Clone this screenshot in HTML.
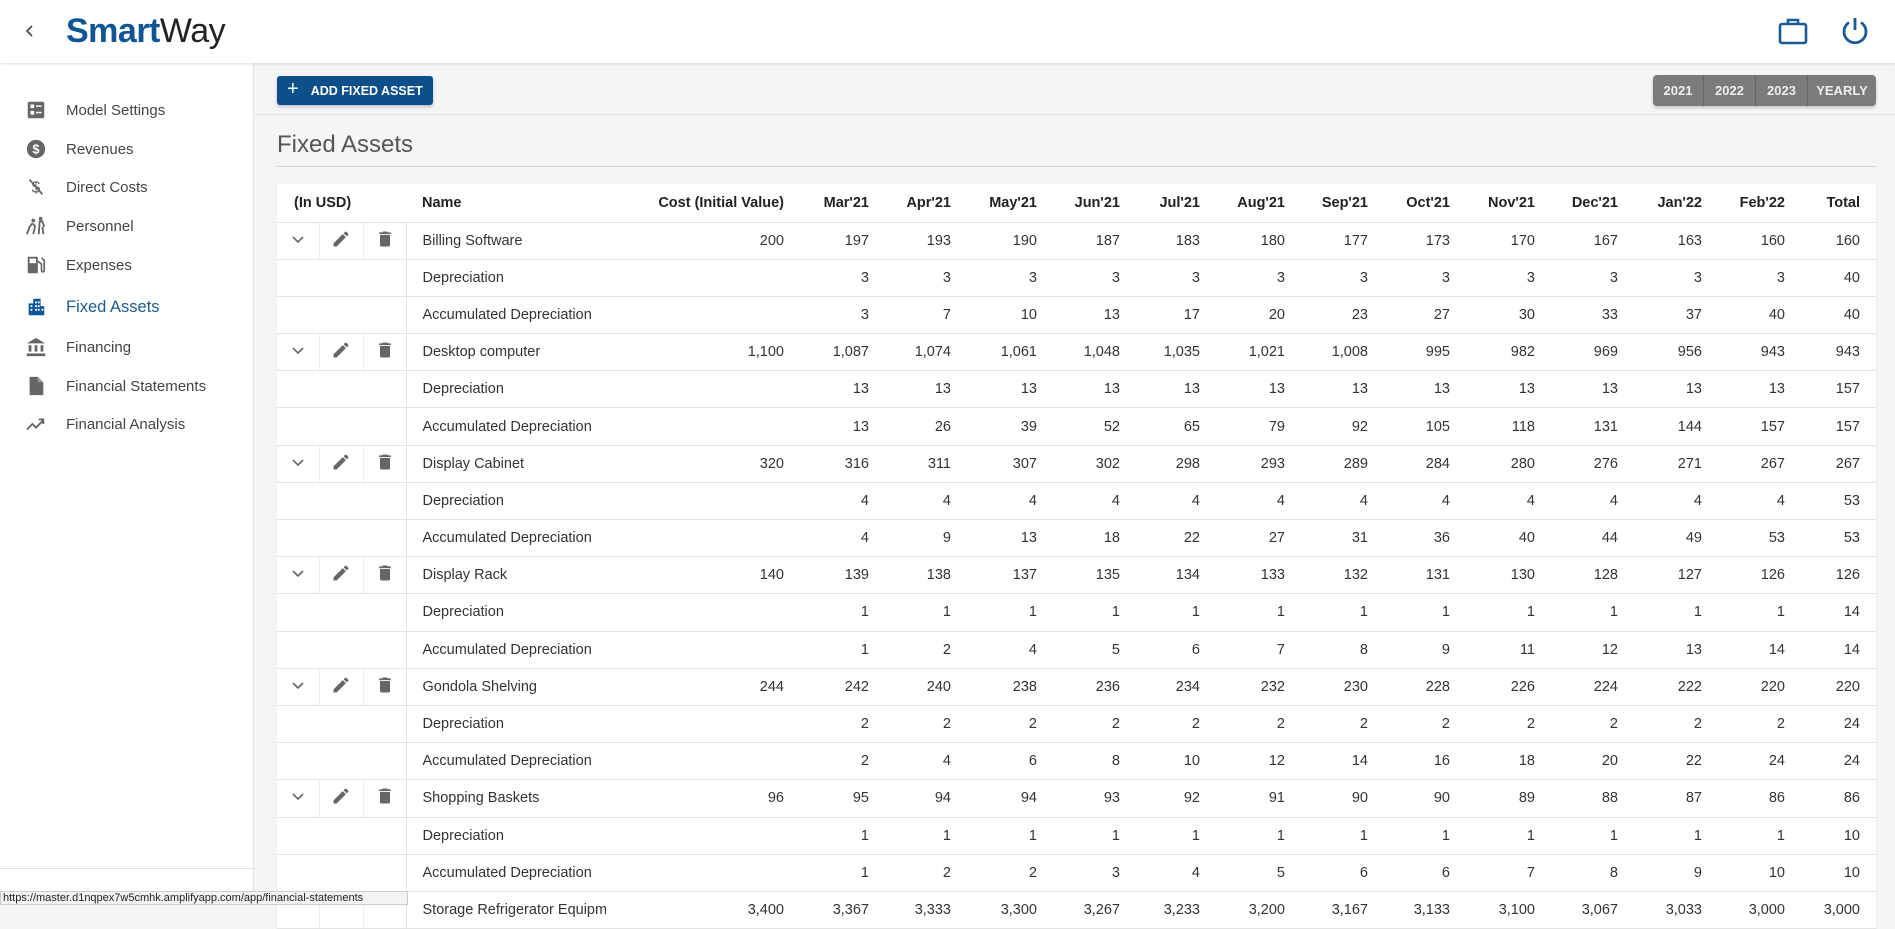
<!DOCTYPE html>
<html><head><meta charset="utf-8"><style>
*{box-sizing:border-box;margin:0;padding:0}
body{width:1895px;height:905px;overflow:hidden;font-family:"Liberation Sans",sans-serif;background:#f4f5f7;position:relative;color:#333}
.hdr{position:absolute;left:0;top:0;width:1895px;height:63px;background:#fff;box-shadow:0 1px 3px rgba(0,0,0,.12);z-index:3}
.logo{position:absolute;left:66px;top:12px;font-size:34px;letter-spacing:-0.5px}
.logo b{color:#0f5494}.logo span{color:#222}
.side{position:absolute;left:0;top:63px;width:254px;height:842px;background:#fff;border-right:1px solid #e4e4e4}
.item{position:absolute;left:0;height:30px;width:254px;display:flex;align-items:center;font-size:15px;color:#444}
.item svg{position:absolute;left:25px;width:22px;height:22px}
.item span{position:absolute;left:66px}
.bar{position:absolute;left:254px;top:63px;width:1641px;height:52px;border-bottom:1px solid #e2e2e2}
.btn{position:absolute;left:277px;top:76px;width:156px;height:29px;background:#0d4f8b;border-radius:3px;color:#fff;font-size:12.5px;font-weight:bold;display:flex;align-items:center;box-shadow:0 2px 3px rgba(0,0,0,.2)}
.yrs{position:absolute;left:1653px;top:75px;height:31px;display:flex;background:#7b7b7b;border-radius:4px;box-shadow:0 2px 3px rgba(0,0,0,.2)}
.yrs div{color:#eee;font-weight:bold;font-size:13px;display:flex;align-items:center;justify-content:center;border-right:1px solid #666}
.ttl{position:absolute;left:277px;top:131px;font-size:24px;color:#555}
.line{position:absolute;left:277px;top:166px;width:1599px;height:1px;background:#d6d6d6}
table{position:absolute;left:277px;top:184px;width:1599px;border-collapse:collapse;background:#fff;table-layout:fixed;font-size:14.5px;box-shadow:0 1px 2px rgba(0,0,0,.06)}
td,th{border-bottom:1px solid #e3e3e3;text-align:right;padding-right:16px;white-space:nowrap;overflow:hidden;color:#333;font-weight:normal}
th{height:38px;font-weight:bold;color:#222}
tr.r td{height:37.2px}
td.n,th.n{text-align:left;padding-left:16px;padding-right:0;border-left:1px solid #e3e3e3}
td.i{text-align:center;padding:0;border-right:1px solid #eee}
td.i3{border-right:none}
.st{position:absolute;left:0;top:891px;width:408px;height:14px;background:#f3f3f3;border:1px solid #ccc;font-size:11px;color:#222;line-height:12px;padding-left:2px;z-index:5}
</style></head><body>
<div class="hdr">
<svg style="position:absolute;left:24px;top:23px" width="12" height="16" viewBox="0 0 12 16"><path d="M8 3L3 8l5 5" fill="none" stroke="#444" stroke-width="1.6"/></svg>
<div class="logo"><b>Smart</b><span>Way</span></div>
<svg style="position:absolute;left:1778px;top:17px" width="30" height="28" viewBox="0 0 30 28"><rect x="2" y="7" width="26" height="19" rx="2" fill="none" stroke="#1a5a92" stroke-width="2.6"/><path d="M10 7V3h10v4" fill="none" stroke="#1a5a92" stroke-width="2.6"/></svg>
<svg style="position:absolute;left:1840px;top:16px" width="30" height="30" viewBox="0 0 30 30"><path d="M9 6.5A11 11 0 1 0 21 6.5" fill="none" stroke="#1a5a92" stroke-width="2.8"/><path d="M15 2v12" stroke="#1a5a92" stroke-width="2.8"/></svg>
</div>
<div class="side">
<div class="item" style="top:32px"><svg viewBox="0 0 24 24"><rect x="3" y="3" width="18" height="18" rx="2" fill="#666"/><rect x="6" y="6" width="4" height="4" fill="#fff"/><rect x="6" y="13" width="4" height="4" fill="#fff"/><rect x="12" y="7" width="6" height="1.6" fill="#fff"/><rect x="12" y="14" width="6" height="1.6" fill="#fff"/></svg><span>Model Settings</span></div>
<div class="item" style="top:71px"><svg viewBox="0 0 24 24"><circle cx="12" cy="12" r="10" fill="#666"/><text x="12" y="17" font-size="14" font-weight="bold" fill="#fff" text-anchor="middle" font-family="Liberation Sans">$</text></svg><span>Revenues</span></div>
<div class="item" style="top:109px"><svg viewBox="0 0 24 24"><text x="12" y="18" font-size="17" fill="#666" text-anchor="middle" font-family="Liberation Sans">$</text><path d="M5 4l14 16" stroke="#666" stroke-width="2"/></svg><span>Direct Costs</span></div>
<div class="item" style="top:148px"><svg viewBox="0 0 24 24"><circle cx="17" cy="4" r="2" fill="#666"/><circle cx="9" cy="6" r="2" fill="#666"/><path d="M15 7h4l2 6M16 7l-1 14M19 13l1 8M8 9l-3 4-3 8M8 9l3 3-2 9" fill="none" stroke="#666" stroke-width="2"/></svg><span>Personnel</span></div>
<div class="item" style="top:187px"><svg viewBox="0 0 24 24"><rect x="3" y="3" width="11" height="18" rx="1" fill="#666"/><rect x="5" y="5" width="7" height="5" fill="#fff"/><path d="M14 8l4 3v7a1.5 1.5 0 0 0 3 0V7l-3-3" fill="none" stroke="#666" stroke-width="1.8"/></svg><span>Expenses</span></div>
<div class="item" style="top:229px;color:#1d5c91;font-size:16.5px"><svg viewBox="0 0 24 24"><path d="M4 21V8h5V3h8v8h4v10z" fill="#0f5494"/><g fill="#fff"><rect x="6" y="10" width="2" height="2"/><rect x="6" y="14" width="2" height="2"/><rect x="11" y="6" width="2" height="2"/><rect x="14" y="6" width="2" height="2"/><rect x="11" y="10" width="2" height="2"/><rect x="14" y="10" width="2" height="2"/><rect x="11" y="14" width="2" height="2"/><rect x="14" y="14" width="2" height="2"/><rect x="18" y="14" width="2" height="2"/></g></svg><span>Fixed Assets</span></div>
<div class="item" style="top:269px"><svg viewBox="0 0 24 24"><path d="M2 8l10-6 10 6z" fill="#666"/><rect x="4" y="10" width="3" height="7" fill="#666"/><rect x="10.5" y="10" width="3" height="7" fill="#666"/><rect x="17" y="10" width="3" height="7" fill="#666"/><rect x="2" y="19" width="20" height="3" fill="#666"/></svg><span>Financing</span></div>
<div class="item" style="top:308px"><svg viewBox="0 0 24 24"><path d="M5 2h9l6 6v14H5z" fill="#666"/><path d="M14 2v6h6" fill="#999"/></svg><span>Financial Statements</span></div>
<div class="item" style="top:346px"><svg viewBox="0 0 24 24"><path d="M2 18l6-6 4 4 8-8M15 7h5v5" fill="none" stroke="#666" stroke-width="2"/></svg><span>Financial Analysis</span></div>
<div style="position:absolute;left:0;top:805px;width:254px;height:1px;background:#e2e2e2"></div>
</div>
<div class="bar"></div>
<div class="btn"><span style="font-size:20px;font-weight:normal;margin:0 12px 2px 10px">+</span>ADD FIXED ASSET</div>
<div class="yrs"><div style="width:51px">2021</div><div style="width:52px">2022</div><div style="width:52px">2023</div><div style="width:68px;border:none">YEARLY</div></div>
<div class="ttl">Fixed Assets</div><div class="line"></div>
<table>
<colgroup><col style="width:42px"><col style="width:44px"><col style="width:43px"><col style="width:200px"><col style="width:194px"><col style="width:85px"><col style="width:82px"><col style="width:86px"><col style="width:83px"><col style="width:80px"><col style="width:85px"><col style="width:83px"><col style="width:82px"><col style="width:85px"><col style="width:83px"><col style="width:84px"><col style="width:83px"><col style="width:75px"></colgroup>
<tr><th colspan="3" style="text-align:left;padding-left:17px">(In USD)</th><th class="n" style="border-left:none">Name</th><th>Cost (Initial Value)</th><th>Mar'21</th><th>Apr'21</th><th>May'21</th><th>Jun'21</th><th>Jul'21</th><th>Aug'21</th><th>Sep'21</th><th>Oct'21</th><th>Nov'21</th><th>Dec'21</th><th>Jan'22</th><th>Feb'22</th><th>Total</th></tr>
<!--A-->
<tr class="r"><td class="i"><svg width="14" height="10" viewBox="0 0 14 10"><path d="M2 2l5 5 5-5" fill="none" stroke="#666" stroke-width="1.6"/></svg></td><td class="i"><svg width="20" height="20" viewBox="0 0 24 24"><path d="M3 17.25V21h3.75L17.8 9.94l-3.75-3.75zM20.7 7.04a1 1 0 0 0 0-1.41l-2.34-2.34a1 1 0 0 0-1.41 0l-1.83 1.83 3.75 3.75z" fill="#666"/></svg></td><td class="i i3"><svg width="20" height="20" viewBox="0 0 24 24"><path d="M6 19a2 2 0 0 0 2 2h8a2 2 0 0 0 2-2V7H6zM19 4h-3.5l-1-1h-5l-1 1H5v2h14z" fill="#666"/></svg></td><td class="n">Billing Software</td><td>200</td><td>197</td><td>193</td><td>190</td><td>187</td><td>183</td><td>180</td><td>177</td><td>173</td><td>170</td><td>167</td><td>163</td><td>160</td><td>160</td></tr>
<tr class="r"><td colspan="3"></td><td class="n">Depreciation</td><td></td><td>3</td><td>3</td><td>3</td><td>3</td><td>3</td><td>3</td><td>3</td><td>3</td><td>3</td><td>3</td><td>3</td><td>3</td><td>40</td></tr>
<tr class="r"><td colspan="3"></td><td class="n">Accumulated Depreciation</td><td></td><td>3</td><td>7</td><td>10</td><td>13</td><td>17</td><td>20</td><td>23</td><td>27</td><td>30</td><td>33</td><td>37</td><td>40</td><td>40</td></tr>
<!--B-->
<tr class="r"><td class="i"><svg width="14" height="10" viewBox="0 0 14 10"><path d="M2 2l5 5 5-5" fill="none" stroke="#666" stroke-width="1.6"/></svg></td><td class="i"><svg width="20" height="20" viewBox="0 0 24 24"><path d="M3 17.25V21h3.75L17.8 9.94l-3.75-3.75zM20.7 7.04a1 1 0 0 0 0-1.41l-2.34-2.34a1 1 0 0 0-1.41 0l-1.83 1.83 3.75 3.75z" fill="#666"/></svg></td><td class="i i3"><svg width="20" height="20" viewBox="0 0 24 24"><path d="M6 19a2 2 0 0 0 2 2h8a2 2 0 0 0 2-2V7H6zM19 4h-3.5l-1-1h-5l-1 1H5v2h14z" fill="#666"/></svg></td><td class="n">Desktop computer</td><td>1,100</td><td>1,087</td><td>1,074</td><td>1,061</td><td>1,048</td><td>1,035</td><td>1,021</td><td>1,008</td><td>995</td><td>982</td><td>969</td><td>956</td><td>943</td><td>943</td></tr>
<tr class="r"><td colspan="3"></td><td class="n">Depreciation</td><td></td><td>13</td><td>13</td><td>13</td><td>13</td><td>13</td><td>13</td><td>13</td><td>13</td><td>13</td><td>13</td><td>13</td><td>13</td><td>157</td></tr>
<tr class="r"><td colspan="3"></td><td class="n">Accumulated Depreciation</td><td></td><td>13</td><td>26</td><td>39</td><td>52</td><td>65</td><td>79</td><td>92</td><td>105</td><td>118</td><td>131</td><td>144</td><td>157</td><td>157</td></tr>
<!--C-->
<tr class="r"><td class="i"><svg width="14" height="10" viewBox="0 0 14 10"><path d="M2 2l5 5 5-5" fill="none" stroke="#666" stroke-width="1.6"/></svg></td><td class="i"><svg width="20" height="20" viewBox="0 0 24 24"><path d="M3 17.25V21h3.75L17.8 9.94l-3.75-3.75zM20.7 7.04a1 1 0 0 0 0-1.41l-2.34-2.34a1 1 0 0 0-1.41 0l-1.83 1.83 3.75 3.75z" fill="#666"/></svg></td><td class="i i3"><svg width="20" height="20" viewBox="0 0 24 24"><path d="M6 19a2 2 0 0 0 2 2h8a2 2 0 0 0 2-2V7H6zM19 4h-3.5l-1-1h-5l-1 1H5v2h14z" fill="#666"/></svg></td><td class="n">Display Cabinet</td><td>320</td><td>316</td><td>311</td><td>307</td><td>302</td><td>298</td><td>293</td><td>289</td><td>284</td><td>280</td><td>276</td><td>271</td><td>267</td><td>267</td></tr>
<tr class="r"><td colspan="3"></td><td class="n">Depreciation</td><td></td><td>4</td><td>4</td><td>4</td><td>4</td><td>4</td><td>4</td><td>4</td><td>4</td><td>4</td><td>4</td><td>4</td><td>4</td><td>53</td></tr>
<tr class="r"><td colspan="3"></td><td class="n">Accumulated Depreciation</td><td></td><td>4</td><td>9</td><td>13</td><td>18</td><td>22</td><td>27</td><td>31</td><td>36</td><td>40</td><td>44</td><td>49</td><td>53</td><td>53</td></tr>
<!--D-->
<tr class="r"><td class="i"><svg width="14" height="10" viewBox="0 0 14 10"><path d="M2 2l5 5 5-5" fill="none" stroke="#666" stroke-width="1.6"/></svg></td><td class="i"><svg width="20" height="20" viewBox="0 0 24 24"><path d="M3 17.25V21h3.75L17.8 9.94l-3.75-3.75zM20.7 7.04a1 1 0 0 0 0-1.41l-2.34-2.34a1 1 0 0 0-1.41 0l-1.83 1.83 3.75 3.75z" fill="#666"/></svg></td><td class="i i3"><svg width="20" height="20" viewBox="0 0 24 24"><path d="M6 19a2 2 0 0 0 2 2h8a2 2 0 0 0 2-2V7H6zM19 4h-3.5l-1-1h-5l-1 1H5v2h14z" fill="#666"/></svg></td><td class="n">Display Rack</td><td>140</td><td>139</td><td>138</td><td>137</td><td>135</td><td>134</td><td>133</td><td>132</td><td>131</td><td>130</td><td>128</td><td>127</td><td>126</td><td>126</td></tr>
<tr class="r"><td colspan="3"></td><td class="n">Depreciation</td><td></td><td>1</td><td>1</td><td>1</td><td>1</td><td>1</td><td>1</td><td>1</td><td>1</td><td>1</td><td>1</td><td>1</td><td>1</td><td>14</td></tr>
<tr class="r"><td colspan="3"></td><td class="n">Accumulated Depreciation</td><td></td><td>1</td><td>2</td><td>4</td><td>5</td><td>6</td><td>7</td><td>8</td><td>9</td><td>11</td><td>12</td><td>13</td><td>14</td><td>14</td></tr>
<!--E-->
<tr class="r"><td class="i"><svg width="14" height="10" viewBox="0 0 14 10"><path d="M2 2l5 5 5-5" fill="none" stroke="#666" stroke-width="1.6"/></svg></td><td class="i"><svg width="20" height="20" viewBox="0 0 24 24"><path d="M3 17.25V21h3.75L17.8 9.94l-3.75-3.75zM20.7 7.04a1 1 0 0 0 0-1.41l-2.34-2.34a1 1 0 0 0-1.41 0l-1.83 1.83 3.75 3.75z" fill="#666"/></svg></td><td class="i i3"><svg width="20" height="20" viewBox="0 0 24 24"><path d="M6 19a2 2 0 0 0 2 2h8a2 2 0 0 0 2-2V7H6zM19 4h-3.5l-1-1h-5l-1 1H5v2h14z" fill="#666"/></svg></td><td class="n">Gondola Shelving</td><td>244</td><td>242</td><td>240</td><td>238</td><td>236</td><td>234</td><td>232</td><td>230</td><td>228</td><td>226</td><td>224</td><td>222</td><td>220</td><td>220</td></tr>
<tr class="r"><td colspan="3"></td><td class="n">Depreciation</td><td></td><td>2</td><td>2</td><td>2</td><td>2</td><td>2</td><td>2</td><td>2</td><td>2</td><td>2</td><td>2</td><td>2</td><td>2</td><td>24</td></tr>
<tr class="r"><td colspan="3"></td><td class="n">Accumulated Depreciation</td><td></td><td>2</td><td>4</td><td>6</td><td>8</td><td>10</td><td>12</td><td>14</td><td>16</td><td>18</td><td>20</td><td>22</td><td>24</td><td>24</td></tr>
<!--F-->
<tr class="r"><td class="i"><svg width="14" height="10" viewBox="0 0 14 10"><path d="M2 2l5 5 5-5" fill="none" stroke="#666" stroke-width="1.6"/></svg></td><td class="i"><svg width="20" height="20" viewBox="0 0 24 24"><path d="M3 17.25V21h3.75L17.8 9.94l-3.75-3.75zM20.7 7.04a1 1 0 0 0 0-1.41l-2.34-2.34a1 1 0 0 0-1.41 0l-1.83 1.83 3.75 3.75z" fill="#666"/></svg></td><td class="i i3"><svg width="20" height="20" viewBox="0 0 24 24"><path d="M6 19a2 2 0 0 0 2 2h8a2 2 0 0 0 2-2V7H6zM19 4h-3.5l-1-1h-5l-1 1H5v2h14z" fill="#666"/></svg></td><td class="n">Shopping Baskets</td><td>96</td><td>95</td><td>94</td><td>94</td><td>93</td><td>92</td><td>91</td><td>90</td><td>90</td><td>89</td><td>88</td><td>87</td><td>86</td><td>86</td></tr>
<tr class="r"><td colspan="3"></td><td class="n">Depreciation</td><td></td><td>1</td><td>1</td><td>1</td><td>1</td><td>1</td><td>1</td><td>1</td><td>1</td><td>1</td><td>1</td><td>1</td><td>1</td><td>10</td></tr>
<tr class="r"><td colspan="3"></td><td class="n">Accumulated Depreciation</td><td></td><td>1</td><td>2</td><td>2</td><td>3</td><td>4</td><td>5</td><td>6</td><td>6</td><td>7</td><td>8</td><td>9</td><td>10</td><td>10</td></tr>
<tr class="r"><td class="i"></td><td class="i"></td><td class="i i3"></td><td class="n">Storage Refrigerator Equipment</td><td>3,400</td><td>3,367</td><td>3,333</td><td>3,300</td><td>3,267</td><td>3,233</td><td>3,200</td><td>3,167</td><td>3,133</td><td>3,100</td><td>3,067</td><td>3,033</td><td>3,000</td><td>3,000</td></tr>
</table>
<div class="st">https://master.d1nqpex7w5cmhk.amplifyapp.com/app/financial-statements</div>
</body></html>
